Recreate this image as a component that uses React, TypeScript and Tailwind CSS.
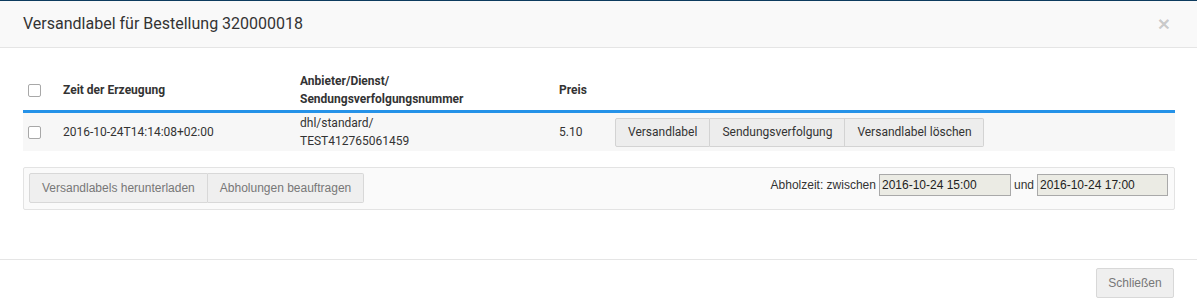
import React from "react";

const roboto = { fontFamily: "Roboto, 'Liberation Sans', sans-serif" };
const arial = { fontFamily: "'Liberation Sans', Arial, sans-serif" };

function Checkbox() {
  return <div className="w-[13px] h-[13px] border border-[#a8a8a8] rounded-[2px] bg-white" />;
}

export default function App() {
  return (
    <div className="w-[1197px] h-[306px] bg-white flex flex-col text-[#333]" style={roboto}>
      <div className="h-px bg-[#0d3b5e]" />
      <div className="h-[47px] bg-[#f9f9f9] border-b border-[#e5e5e5] flex items-center justify-between pl-[23px] pr-[27px]">
        <div className="text-[16px] text-[#333]">Versandlabel für Bestellung 320000018</div>
        <div className="text-[21px] font-bold leading-none text-black/20 -mt-[1px]" style={arial}>×</div>
      </div>

      <div className="flex-1 pt-[22px] pl-[23px] pr-[22px]">
        <div className="grid grid-cols-[40px_237px_259px_56px_1fr] text-[12px] leading-[18px]">
          <div className="flex items-center pl-[5px] h-[40px]"><Checkbox /></div>
          <div className="flex items-center font-bold">Zeit der Erzeugung</div>
          <div className="flex flex-col justify-center font-bold">
            <span>Anbieter/Dienst/</span>
            <span>Sendungsverfolgungsnummer</span>
          </div>
          <div className="flex items-center font-bold">Preis</div>
          <div />
          <div className="col-span-5 h-[3px] bg-[#2592e8]" />
          <div className="col-span-5 grid grid-cols-[40px_237px_259px_56px_1fr] bg-[#f7f7f7] h-[38px]">
            <div className="flex items-center pl-[5px]"><Checkbox /></div>
            <div className="flex items-center">2016-10-24T14:14:08+02:00</div>
            <div className="flex flex-col justify-center">
              <span>dhl/standard/</span>
              <span>TEST412765061459</span>
            </div>
            <div className="flex items-center">5.10</div>
            <div className="flex items-center">
              <div className="flex h-[29px]">
                <button className="px-[12px] bg-[#ededed] border border-[#d3d3d3] rounded-l-[2px] text-[12px] text-[#333]">Versandlabel</button>
                <button className="px-[12px] bg-[#ededed] border border-l-0 border-[#d3d3d3] text-[12px] text-[#333]">Sendungsverfolgung</button>
                <button className="pl-[12px] pr-[11px] bg-[#ededed] border border-l-0 border-[#d3d3d3] rounded-r-[2px] text-[12px] text-[#333]">Versandlabel löschen</button>
              </div>
            </div>
          </div>
        </div>

        <div className="mt-[16px] h-[43px] border border-[#e3e3e3] rounded-[2px] bg-[#fafafa] flex items-start justify-between pl-[5px] pr-[6px] pt-[5px] text-[12px]" style={arial}>
          <div className="flex h-[30px]">
            <button className="px-[12px] bg-[#efefef] border border-[#d8d8d8] rounded-l-[2px] text-[#777]">Versandlabels herunterladen</button>
            <button className="px-[12px] bg-[#efefef] border border-l-0 border-[#d8d8d8] rounded-r-[2px] text-[#777]">Abholungen beauftragen</button>
          </div>
          <div className="flex items-center h-[22px] mt-[1px] text-[#333]">
            <span>Abholzeit: zwischen</span>
            <div className="ml-[3px] w-[132px] h-[22px] bg-[#ebebe4] border border-[#a9a9a9] flex items-center pl-[2px] text-[#222]">2016-10-24 15:00</div>
            <span className="ml-[3px]">und</span>
            <div className="ml-[3px] w-[131px] h-[22px] bg-[#ebebe4] border border-[#a9a9a9] flex items-center pl-[2px] text-[#222]">2016-10-24 17:00</div>
          </div>
        </div>
      </div>

      <div className="h-[47px] border-t border-[#e5e5e5] flex items-start justify-end pt-[8px] pr-[23px]" style={arial}>
        <button className="w-[78px] h-[30px] bg-[#efefef] border border-[#d8d8d8] rounded-[2px] text-[12px] text-[#777]">Schließen</button>
      </div>
    </div>
  );
}
